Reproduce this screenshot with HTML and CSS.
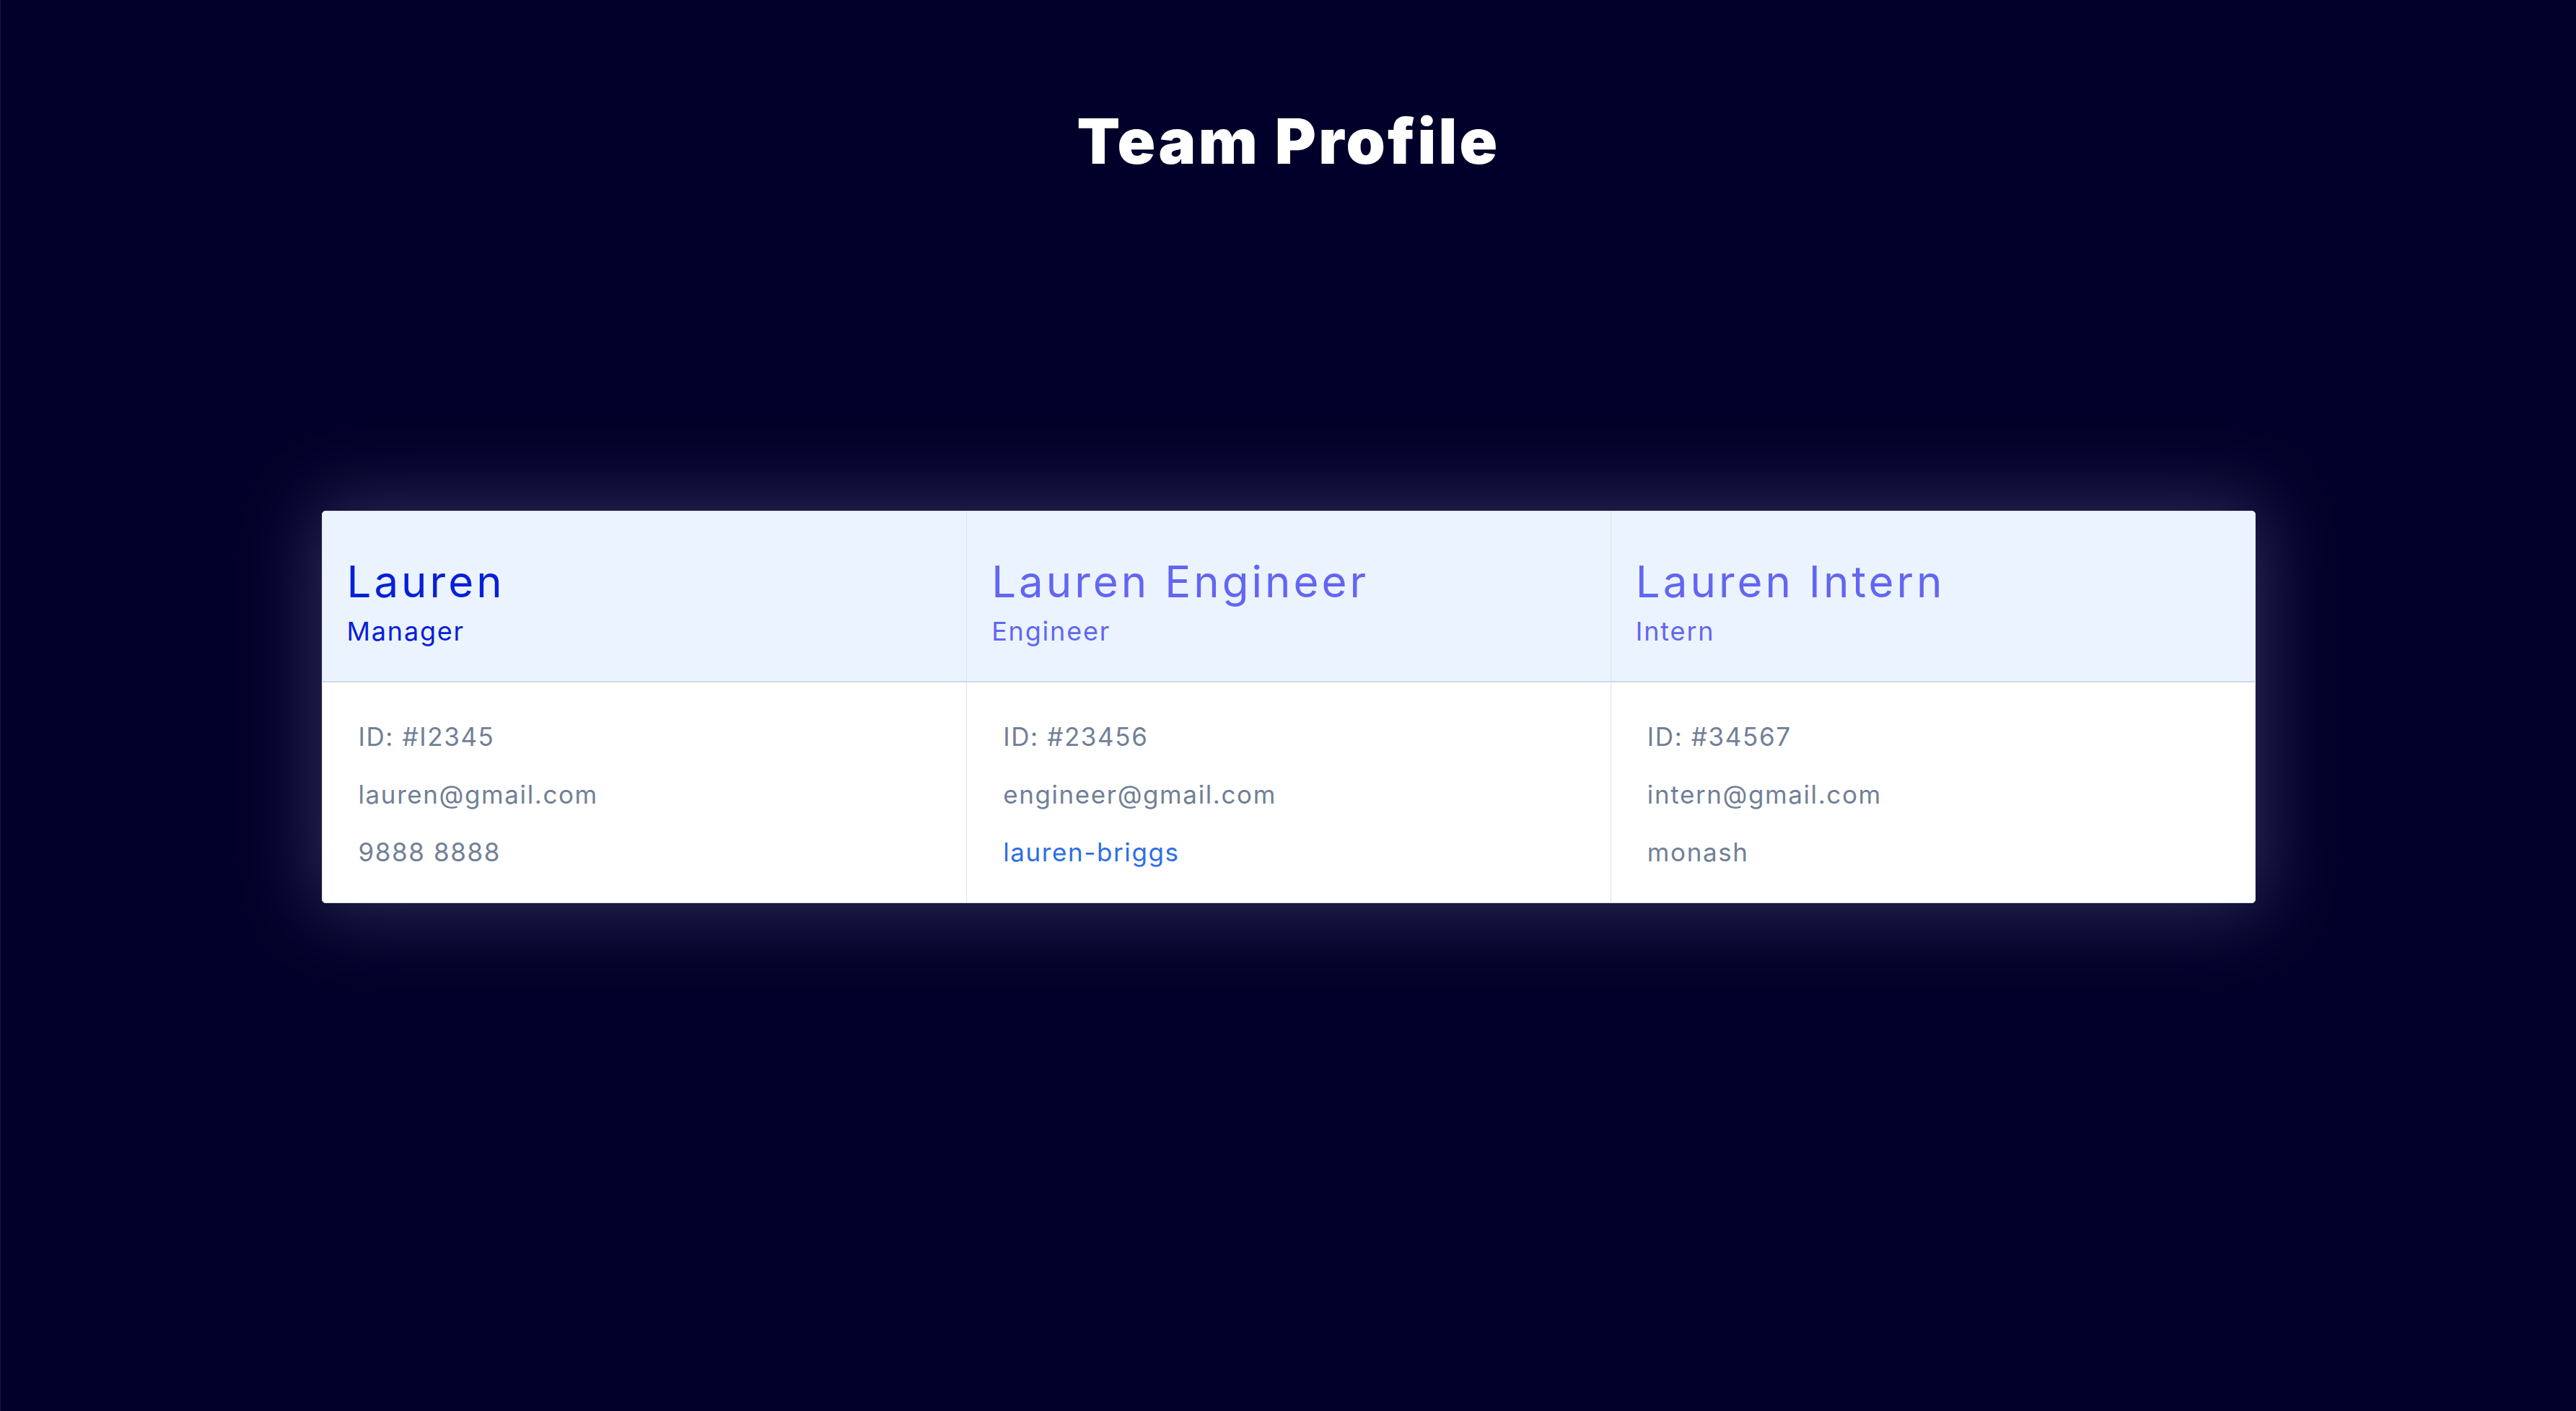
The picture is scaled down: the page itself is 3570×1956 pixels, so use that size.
FILE: index.html
```html
<!DOCTYPE html>
<html lang="en">
<head>
<meta charset="utf-8">
<title>Team Profile</title>
<link rel="stylesheet" href="styles.css">
</head>
<body>
<div class="page">
  <header class="top">
    <h1 class="title">Team Profile</h1>
  </header>
  <main class="card">
    <div class="row head">
      <div class="cell">
        <div class="name manager">Lauren</div>
        <div class="role manager">Manager</div>
      </div>
      <div class="cell">
        <div class="name other">Lauren Engineer</div>
        <div class="role other">Engineer</div>
      </div>
      <div class="cell">
        <div class="name other">Lauren Intern</div>
        <div class="role other">Intern</div>
      </div>
    </div>
    <div class="row body">
      <div class="cell">
        <p class="line">ID: #I2345</p>
        <p class="line">lauren@gmail.com</p>
        <p class="line">9888 8888</p>
      </div>
      <div class="cell">
        <p class="line">ID: #23456</p>
        <p class="line">engineer@gmail.com</p>
        <p class="line"><a class="link" href="#">lauren-briggs</a></p>
      </div>
      <div class="cell">
        <p class="line">ID: #34567</p>
        <p class="line">intern@gmail.com</p>
        <p class="line">monash</p>
      </div>
    </div>
  </main>
  <div class="spacer"></div>
</div>
</body>
</html>
```

FILE: styles.css
```css
html, body {
  margin: 0;
  padding: 0;
}
body {
  background: #00002a;
  font-family: Inter, "Noto Sans", sans-serif;
  border-left: 1px solid #1a1a3c;
}
.page {
  min-height: 100vh;
  display: grid;
  grid-template-rows: 1fr auto 1fr;
}
.top {
  align-self: start;
  text-align: center;
}
.title {
  margin: 145px 0 0;
  font-size: 87px;
  line-height: 102px;
  font-weight: 900;
  color: #ffffff;
  letter-spacing: 3.3px;
}
.card {
  justify-self: center;
  width: 2680px;
  margin-top: 4px;
  box-sizing: border-box;
  border: 1px solid #dcdfe4;
  border-radius: 5px;
  background: #ffffff;
  overflow: hidden;
  box-shadow: 0 0 110px 10px rgba(210, 210, 255, 0.22);
}
.row {
  display: grid;
  grid-template-columns: 1fr 1fr 1fr;
}
.head {
  background: #ebf4fe;
  border-bottom: 2px solid #cfd9e4;
}
.cell + .cell {
  border-left: 1px solid #dfe2e6;
}
.head .cell {
  padding: 61px 36px 47px 34px;
}
.name {
  font-size: 60px;
  line-height: 72px;
  font-weight: 400;
  letter-spacing: 4px;
}
.role {
  margin-top: 12px;
  font-size: 36px;
  line-height: 43px;
  letter-spacing: 1.8px;
}
.manager {
  color: #0620d8;
}
.other {
  color: #6366f1;
}
.body .cell {
  padding: 35px 36px 30px 50px;
}
.line {
  margin: 0;
  font-size: 35px;
  line-height: 80px;
  color: #718096;
  letter-spacing: 1.6px;
}
.link {
  color: #2c6ee8;
  text-decoration: none;
}
```
